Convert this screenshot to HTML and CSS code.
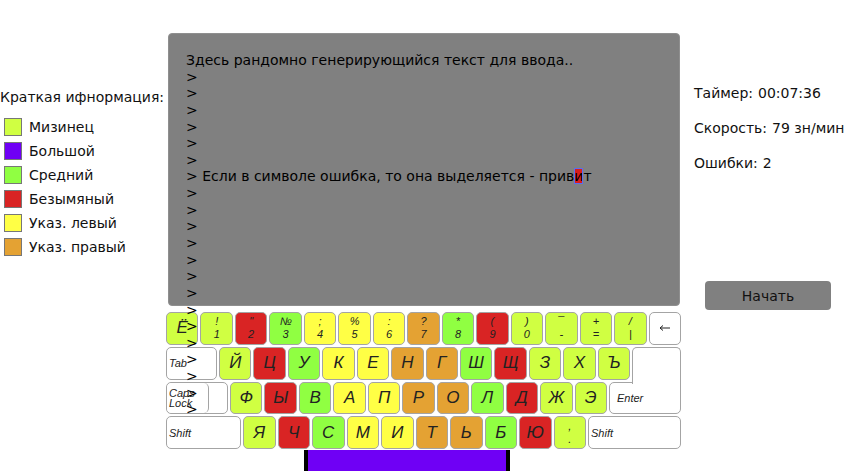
FILE: index.html
```html
<!DOCTYPE html>
<html lang="ru">
<head>
<meta charset="utf-8">
<meta name="viewport" content="width=device-width, initial-scale=1">
<title>Клавиатурный тренажёр</title>
<link rel="stylesheet" href="styles.css">
</head>
<body>
<div class="trainer">
  <aside class="legend">
    <h2 class="legend-title">Краткая ифнормация:</h2>
    <ul class="legend-list">
      <li><span class="swatch lime"></span>Мизинец</li>
      <li><span class="swatch violet"></span>Большой</li>
      <li><span class="swatch green"></span>Средний</li>
      <li><span class="swatch red"></span>Безымяный</li>
      <li><span class="swatch yellow"></span>Указ. левый</li>
      <li><span class="swatch orange"></span>Указ. правый</li>
    </ul>
  </aside>

  <main class="stage">
    <section class="panel">
      <div class="lines">
        <p>Здесь рандомно генерирующийся текст для ввода..</p>
        <p>&gt;</p><p>&gt;</p><p>&gt;</p><p>&gt;</p><p>&gt;</p><p>&gt;</p>
        <p>&gt; Если в символе ошибка, то она выделяется - прив<mark>и</mark>т</p>
        <p>&gt;</p><p>&gt;</p><p>&gt;</p><p>&gt;</p><p>&gt;</p><p>&gt;</p><p>&gt;</p>
        <p>&gt;</p><p>&gt;</p><p>&gt;</p><p>&gt;</p><p>&gt;</p><p>&gt;</p><p>&gt;</p>
      </div>
    </section>

    <section class="keyboard">
      <div class="row">
        <button class="key lime">Ё</button>
        <button class="key pair lime"><span>!</span><span>1</span></button>
        <button class="key pair red"><span>"</span><span>2</span></button>
        <button class="key pair green"><span>№</span><span>3</span></button>
        <button class="key pair yellow"><span>;</span><span>4</span></button>
        <button class="key pair yellow"><span>%</span><span>5</span></button>
        <button class="key pair yellow"><span>:</span><span>6</span></button>
        <button class="key pair orange"><span>?</span><span>7</span></button>
        <button class="key pair green"><span>*</span><span>8</span></button>
        <button class="key pair red"><span>(</span><span>9</span></button>
        <button class="key pair lime"><span>)</span><span>0</span></button>
        <button class="key pair lime"><span>¯</span><span>-</span></button>
        <button class="key pair lime"><span>+</span><span>=</span></button>
        <button class="key pair lime"><span>/</span><span>|</span></button>
        <button class="key" aria-label="Backspace"><svg class="arrow" viewBox="0 0 12 8"><path d="M1 4H11M4 1.5L1 4L4 6.5"/></svg></button>
      </div>
      <div class="row">
        <button class="key named tab">Tab</button>
        <button class="key lime">Й</button>
        <button class="key red">Ц</button>
        <button class="key green">У</button>
        <button class="key yellow">К</button>
        <button class="key yellow">Е</button>
        <button class="key orange">Н</button>
        <button class="key orange">Г</button>
        <button class="key green">Ш</button>
        <button class="key red">Щ</button>
        <button class="key lime">З</button>
        <button class="key lime">Х</button>
        <button class="key lime">Ъ</button>
        <span class="key enter-top"></span>
      </div>
      <div class="row">
        <div class="key caps"><button class="key named caps-face">Caps<br>Lock</button></div>
        <button class="key lime">Ф</button>
        <button class="key red">Ы</button>
        <button class="key green">В</button>
        <button class="key yellow">А</button>
        <button class="key yellow">П</button>
        <button class="key orange">Р</button>
        <button class="key orange">О</button>
        <button class="key green">Л</button>
        <button class="key red">Д</button>
        <button class="key lime">Ж</button>
        <button class="key lime">Э</button>
        <button class="key named enter">Enter</button>
      </div>
      <div class="row">
        <button class="key named shift-left">Shift</button>
        <button class="key lime">Я</button>
        <button class="key red">Ч</button>
        <button class="key green">С</button>
        <button class="key yellow">М</button>
        <button class="key yellow">И</button>
        <button class="key orange">Т</button>
        <button class="key orange">Ь</button>
        <button class="key green">Б</button>
        <button class="key red">Ю</button>
        <button class="key pair lime"><span>,</span><span>.</span></button>
        <button class="key named shift-right">Shift</button>
      </div>
    </section>
    <button class="space violet" aria-label="Пробел"></button>
  </main>

  <aside class="side">
    <dl class="stats">
      <div><dt>Таймер:</dt><dd>00:07:36</dd></div>
      <div><dt>Скорость:</dt><dd>79 зн/мин</dd></div>
      <div><dt>Ошибки:</dt><dd>2</dd></div>
    </dl>
    <button class="start">Начать</button>
  </aside>
</div>
</body>
</html>
```
FILE: styles.css
```css
* { box-sizing: border-box; }

body {
  margin: 0;
  background: #fff;
  color: #111;
  font: 14px/18px "DejaVu Sans", sans-serif;
}

h2, ul, dl, dd, p { margin: 0; padding: 0; }

button { margin: 0; padding: 0; color: inherit; font: inherit; }

.trainer {
  display: grid;
  grid-template-columns: 166px 1fr 164px;
}

.lime { background: #d0ff42; }
.violet { background: #6f00f5; }
.green { background: #90ff42; }
.red { background: #d92424; }
.yellow { background: #ffff45; }
.orange { background: #e4a233; }

/* Finger colours */
.legend { padding-top: 88px; }

.legend-title {
  font-size: 14px;
  font-weight: 400;
  white-space: nowrap;
}

.legend-list {
  display: grid;
  gap: 6px;
  padding: 12px 0 0 4px;
  list-style: none;
}

.legend-list li {
  display: flex;
  gap: 7px;
}

.swatch {
  width: 18px;
  height: 18px;
  border: 1px solid #777;
}

/* Typing panel: the lines run on over the keyboard */
.stage { padding-top: 33px; }

.panel {
  height: 273px;
  margin: 0 1px 0 2px;
  padding: 18px 17px;
  border: 1px solid #8f8f8f;
  border-radius: 4px;
  background: #808080;
}

.lines {
  position: relative;
  z-index: 2;
  display: grid;
  grid-template-rows: repeat(22, 1fr);
  height: 366px;
  color: #000;
  line-height: 16px;
  white-space: nowrap;
  pointer-events: none;
}

mark {
  outline: 1px solid #5a6cf0;
  outline-offset: -1px;
  background: #d91c1c;
  color: #000;
}

/* Keyboard */
.keyboard {
  display: grid;
  grid-template-rows: repeat(4, 1fr);
  gap: 2px;
  height: 137px;
  margin-top: 6px;
}

.row {
  display: flex;
  gap: 2px;
}

.key {
  display: flex;
  flex: 1 1 0;
  align-items: center;
  justify-content: center;
  min-width: 0;
  border: 1px solid #a4a4a4;
  border-radius: 5px;
  color: #222;
  font: italic 17px/20px "Liberation Sans", sans-serif;
}

.key:not(.lime, .green, .red, .yellow, .orange) { background: #fff; }

.pair {
  flex-direction: column;
  font-size: 11px;
  line-height: 13px;
}

.named {
  justify-content: flex-start;
  padding-left: 2px;
  font-size: 11px;
  line-height: 10px;
  text-align: left;
}

.tab { flex: 0 0 51px; }
.shift-left { flex: 0 0 75px; }
.shift-right { flex: 0 0 93px; }

.enter {
  flex: 0 0 72px;
  padding-left: 7px;
  border-top-right-radius: 0;
}

.enter-top {
  z-index: 1;
  flex: 0 0 49px;
  margin-bottom: -4px;
  border-bottom: 0;
  border-radius: 5px 5px 0 0;
}

.caps {
  flex: 0 0 62px;
  align-items: stretch;
  justify-content: flex-start;
}

.caps-face {
  flex: 0 0 42px;
  border-width: 0 1px 0 0;
}

.arrow {
  width: 12px;
  height: 8px;
  fill: none;
  stroke: #222;
}

.space {
  display: block;
  width: 40%;
  height: 21px;
  margin: 1px auto 0 138px;
  border: solid #000;
  border-width: 0 4px;
}

/* Results and start */
.side {
  display: flex;
  flex-direction: column;
  padding: 84px 0 0 13px;
}

.stats {
  display: grid;
  gap: 17px;
  white-space: nowrap;
}

.stats div {
  display: flex;
  gap: 5px;
}

.start {
  height: 29px;
  margin: 109px 14px 0 11px;
  border: 0;
  border-radius: 4px;
  background: #808080;
}
```
